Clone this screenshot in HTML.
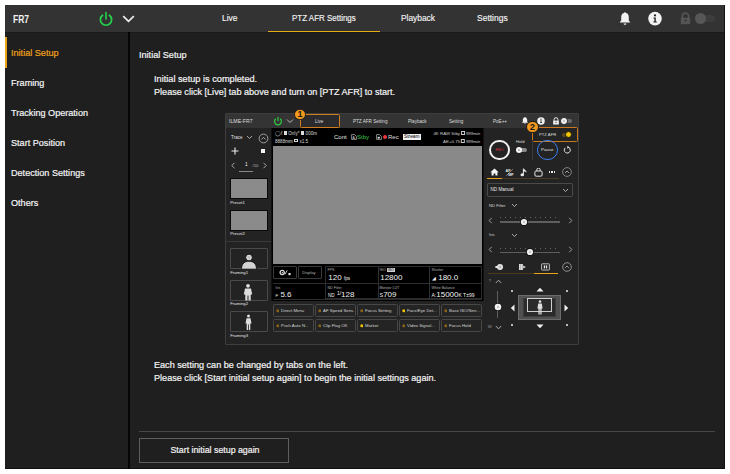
<!DOCTYPE html>
<html><head><meta charset="utf-8">
<style>
*{margin:0;padding:0;box-sizing:border-box}
html,body{width:730px;height:474px;background:#fff;overflow:hidden;position:relative;font-family:"Liberation Sans",sans-serif}
.a{position:absolute}
.t{position:absolute;white-space:nowrap;line-height:1;color:#e6e6e6}
#app{left:5px;top:5px;width:720px;height:464px;background:#1f1f1f;border-right:1px solid #121212;border-bottom:1px solid #121212}
#hdr{left:5px;top:5px;width:719px;height:27px;background:#333}
.side{font-size:9.1px;left:11px;color:#f4f4f4;-webkit-text-stroke:0.2px currentColor}
.tab{color:#f2f2f2;-webkit-text-stroke:0.15px currentColor}
.body{font-size:9.1px;color:#f4f4f4;-webkit-text-stroke:0.2px currentColor}
/* embedded */
#emb{left:225px;top:113px;width:354px;height:232px;background:#232323;border:1px solid #3d3d3d;border-radius:1px}
.e{position:absolute;white-space:nowrap;line-height:1;color:#ddd;font-size:4px}
</style></head><body>
<div id="app" class="a"></div>
<div id="hdr" class="a"></div>
<div class="a" style="left:5px;top:32px;width:719px;height:1px;background:#191919"></div>
<div class="t" style="left:12.8px;top:14px;font-size:10.6px;font-weight:bold;transform-origin:0 0;transform:scaleX(0.8);color:#f0f0f0">FR7</div>
<!-- power icon -->
<svg class="a" style="left:98px;top:11px" width="16" height="16" viewBox="0 0 16 16"><path d="M4.6 4.2A5.6 5.6 0 1 0 11.4 4.2" fill="none" stroke="#24d34c" stroke-width="1.7" stroke-linecap="round"/><path d="M8 1.6V8" stroke="#24d34c" stroke-width="1.6" stroke-linecap="round"/></svg>
<svg class="a" style="left:122px;top:14px" width="13" height="9" viewBox="0 0 13 9"><path d="M1.2 2.2L6.5 7.3L11.8 2.2" fill="none" stroke="#eeeeee" stroke-width="1.7"/></svg>
<div class="t tab" style="left:222px;top:14px;font-size:8.5px">Live</div>
<div class="t tab" style="left:292px;top:14px;font-size:8.3px;transform-origin:0 0;transform:scaleX(0.96)">PTZ AFR Settings</div>
<div class="a" style="left:267.8px;top:30.6px;width:112px;height:1.7px;background:#e6ab12"></div>
<div class="t tab" style="left:401px;top:14px;font-size:8.4px">Playback</div>
<div class="t tab" style="left:477px;top:14px;font-size:8.5px">Settings</div>
<!-- bell -->
<svg class="a" style="left:618px;top:11px" width="14" height="15" viewBox="0 0 14 15"><path d="M7 1.2C7.6 1.2 8 1.6 8 2.1C10 2.6 10.8 4.4 10.8 6.4V9.6L12.4 11.6H1.6L3.2 9.6V6.4C3.2 4.4 4 2.6 6 2.1C6 1.6 6.4 1.2 7 1.2Z" fill="#f2f2f2"/><path d="M5.6 12.4H8.4C8.4 13.3 7.8 13.8 7 13.8C6.2 13.8 5.6 13.3 5.6 12.4Z" fill="#f2f2f2"/></svg>
<!-- info -->
<svg class="a" style="left:647px;top:11px" width="16" height="16" viewBox="0 0 16 16"><circle cx="8" cy="7.6" r="6.8" fill="#f2f2f2"/><circle cx="8" cy="4.4" r="1.1" fill="#222"/><path d="M6.4 6.4H8.8V10.6H9.8V11.6H6.4V10.6H7.4V7.4H6.4Z" fill="#222"/></svg>
<!-- lock -->
<svg class="a" style="left:679px;top:12px" width="13" height="13" viewBox="0 0 13 13"><path d="M3.4 6V4.2A3.1 3.1 0 0 1 9.6 4.2V6" fill="none" stroke="#555" stroke-width="1.6"/><rect x="1.8" y="5.8" width="9.4" height="6.4" fill="#555"/><circle cx="6.5" cy="8.6" r="1" fill="#333"/></svg>
<div class="a" style="left:697px;top:15px;width:18px;height:7px;border-radius:4px;background:#3d3d3d"></div>
<div class="a" style="left:695px;top:13px;width:11px;height:11px;border-radius:50%;background:#575757"></div>

<!-- sidebar -->
<div class="a" style="left:128px;top:32px;width:1.5px;height:437px;background:#050505"></div>
<div class="a" style="left:5px;top:37px;width:2px;height:31px;background:#e8a317"></div>
<div class="t side" style="top:49px;color:#f0a21c">Initial Setup</div>
<div class="t side" style="top:79px">Framing</div>
<div class="t side" style="top:109px">Tracking Operation</div>
<div class="t side" style="top:139px">Start Position</div>
<div class="t side" style="top:169px">Detection Settings</div>
<div class="t side" style="top:199px">Others</div>

<!-- content -->
<div class="t body" style="left:139px;top:51px">Initial Setup</div>
<div class="t body" style="left:154px;top:75px;font-size:9.2px">Initial setup is completed.</div>
<div class="t body" style="left:154px;top:88px">Please click [Live] tab above and turn on [PTZ AFR] to start.</div>
<div class="t body" style="left:154px;top:361px">Each setting can be changed by tabs on the left.</div>
<div class="t body" style="left:154px;top:374px">Please click [Start initial setup again] to begin the initial settings again.</div>
<div class="a" style="left:139px;top:431.1px;width:576px;height:1.3px;background:#464646"></div>
<div class="a" style="left:139px;top:437.5px;width:150px;height:25.5px;border:1px solid #5e5e5e"></div>
<div class="t body" style="left:170.5px;top:445.6px;font-size:8.8px">Start initial setup again</div>


<div id="emb" class="a"></div>
<!-- embedded header -->
<div class="a" style="left:226px;top:114px;width:352px;height:14px;background:#343434"></div>
<div class="e" style="left:229px;top:119px;font-size:5.2px;color:#ddd">ILME-FR7</div>
<svg class="a" style="left:273px;top:116px" width="10" height="10" viewBox="0 0 10 10"><path d="M2.8 2.8A3.4 3.4 0 1 0 7.2 2.8" fill="none" stroke="#2ecc40" stroke-width="1.2"/><path d="M5 1V5" stroke="#2ecc40" stroke-width="1.2"/></svg>
<svg class="a" style="left:286px;top:118px" width="8" height="6" viewBox="0 0 8 6"><path d="M1 1.5L4 4.5L7 1.5" fill="none" stroke="#ccc" stroke-width="0.9"/></svg>
<div class="a" style="left:299.8px;top:114px;width:40.4px;height:13.6px;border:1.3px solid #d07e1c;border-radius:1.5px;background:#2b2b2e"></div>
<div class="e" style="left:315px;top:120px;font-size:4.6px">Live</div>
<div class="e" style="left:353px;top:120px;font-size:4.6px">PTZ AFR Setting</div>
<div class="e" style="left:408px;top:120px;font-size:4.6px">Playback</div>
<div class="e" style="left:449px;top:120px;font-size:4.6px">Setting</div>
<div class="e" style="left:493px;top:120px;font-size:4.6px">PoE++</div>
<svg class="a" style="left:521px;top:116px" width="8" height="9" viewBox="0 0 14 15"><path d="M7 1.2C7.6 1.2 8 1.6 8 2.1C10 2.6 10.8 4.4 10.8 6.4V9.6L12.4 11.6H1.6L3.2 9.6V6.4C3.2 4.4 4 2.6 6 2.1C6 1.6 6.4 1.2 7 1.2Z" fill="#f2f2f2"/><path d="M5.6 12.4H8.4C8.4 13.3 7.8 13.8 7 13.8C6.2 13.8 5.6 13.3 5.6 12.4Z" fill="#f2f2f2"/></svg>
<svg class="a" style="left:537px;top:117px" width="8" height="8" viewBox="0 0 16 16"><circle cx="8" cy="8" r="7.5" fill="#f2f2f2"/><circle cx="8" cy="4.4" r="1.3" fill="#222"/><path d="M6.4 6.4H8.9V10.6H9.9V11.8H6.2V10.6H7.3V7.5H6.4Z" fill="#222"/></svg>
<svg class="a" style="left:552px;top:116.5px" width="8" height="8" viewBox="0 0 13 13"><path d="M3.4 6V4.2A3.1 3.1 0 0 1 9.6 4.2V6" fill="none" stroke="#eee" stroke-width="1.6"/><rect x="1.8" y="5.8" width="9.4" height="6.4" fill="#eee"/><circle cx="6.5" cy="8.6" r="1" fill="#333"/></svg>
<div class="a" style="left:562px;top:119px;width:10px;height:4.4px;border-radius:2.2px;background:#6a6a6a"></div>
<div class="a" style="left:560.2px;top:117.2px;width:7.6px;height:7.6px;border-radius:50%;background:#f0f0f0;border:0.6px solid #222"></div><div class="a" style="left:563.2px;top:120px;width:2.2px;height:2.2px;border-radius:50%;background:#bbb"></div>
<!-- badge 1 -->
<div class="a" style="left:294px;top:108.6px;width:11.6px;height:11.6px;border-radius:50%;background:#f39a1e;border:1px solid #1f1f1f"></div>
<div class="e" style="left:297.6px;top:110px;font-size:9px;font-weight:bold;color:#1a1a1a">1</div>
<!-- left column -->
<div class="a" style="left:270.5px;top:128px;width:1.5px;height:173px;background:#111"></div>
<div class="e" style="left:231px;top:135.8px;font-size:4.6px;color:#e0e0e0">Trace</div>
<svg class="a" style="left:246px;top:135px" width="7" height="5" viewBox="0 0 7 5"><path d="M1 1L3.5 3.5L6 1" fill="none" stroke="#ccc" stroke-width="0.8"/></svg>
<svg class="a" style="left:258px;top:133px" width="11" height="11" viewBox="0 0 11 11"><circle cx="5.5" cy="5.5" r="4.4" fill="none" stroke="#bbb" stroke-width="0.8"/><path d="M3.5 6.4L5.5 4.4L7.5 6.4" fill="none" stroke="#ccc" stroke-width="0.8"/></svg>
<svg class="a" style="left:231px;top:147px" width="8" height="8" viewBox="0 0 8 8"><path d="M4 0.5V7.5M0.5 4H7.5" stroke="#eee" stroke-width="1.1"/></svg>
<div class="a" style="left:261px;top:148.6px;width:4.2px;height:4.2px;background:#f4f4f4"></div>
<svg class="a" style="left:230px;top:162px" width="6" height="7" viewBox="0 0 6 7"><path d="M4.5 0.8L1.8 3.5L4.5 6.2" fill="none" stroke="#ccc" stroke-width="0.8"/></svg>
<div class="e" style="left:245px;top:163px;font-size:4.8px;color:#eee">1</div>
<div class="e" style="left:252.6px;top:163.6px;font-size:4.2px;color:#bbb">/10</div>
<svg class="a" style="left:262px;top:162px" width="6" height="7" viewBox="0 0 6 7"><path d="M1.5 0.8L4.2 3.5L1.5 6.2" fill="none" stroke="#ccc" stroke-width="0.8"/></svg>
<div class="a" style="left:239px;top:171px;width:13.5px;height:0.8px;background:#888"></div>
<div class="a" style="left:230px;top:178px;width:38px;height:21px;background:#8b8b8b;border:0.6px solid #0a0a0a"></div>
<div class="e" style="left:230.3px;top:200.7px;font-size:4.2px;color:#e8e8e8">Preset1</div>
<div class="a" style="left:230px;top:210px;width:38px;height:21px;background:#8b8b8b;border:0.6px solid #0a0a0a"></div>
<div class="e" style="left:230.3px;top:232.4px;font-size:4.2px;color:#e8e8e8">Preset2</div>
<div class="a" style="left:226px;top:240.5px;width:45px;height:0.8px;background:#3a3a3a"></div>
<div class="a" style="left:230px;top:248.4px;width:37.5px;height:21px;border:0.8px solid #4a4a4a;border-radius:1px"></div>
<div class="e" style="left:230.3px;top:271.1px;font-size:4.2px;color:#e8e8e8">Framing1</div>
<div class="a" style="left:230px;top:280px;width:37.5px;height:20.5px;border:0.8px solid #4a4a4a;border-radius:1px"></div>
<div class="e" style="left:230.3px;top:301.9px;font-size:4.2px;color:#e8e8e8">Framing2</div>
<div class="a" style="left:230px;top:311.3px;width:37.5px;height:21px;border:0.8px solid #4a4a4a;border-radius:1px"></div>
<div class="e" style="left:230.3px;top:333.6px;font-size:4.2px;color:#e8e8e8">Framing3</div>
<svg class="a" style="left:240.3px;top:252px" width="18" height="18" viewBox="0 0 18 18"><path d="M1.5 17.2C1.5 11.8 4.6 9.2 9 9.2C13.4 9.2 16.5 11.8 16.5 17.2Z" fill="#d2d2d2" stroke="#0e0e0e" stroke-width="0.9"/><circle cx="9" cy="5.5" r="3.4" fill="#d8d8d8" stroke="#0e0e0e" stroke-width="1"/><circle cx="9" cy="5.5" r="1.4" fill="#bdbdbd"/></svg>
<svg class="a" style="left:243px;top:283px" width="10" height="18" viewBox="0 0 10 18"><circle cx="5" cy="2.8" r="1.9" fill="#ddd"/><path d="M2 5.5H8L9.2 11.5H7.7V17.5H5.5V12.5H4.5V17.5H2.3V11.5H0.8Z" fill="#ddd"/></svg>
<svg class="a" style="left:244.5px;top:314px" width="7" height="17" viewBox="0 0 7 17"><circle cx="3.5" cy="2" r="1.5" fill="#ddd"/><path d="M1.5 4.2H5.5L6.5 9.5H5.3V16H3.9V10.5H3.1V16H1.7V9.5H0.5Z" fill="#ddd"/></svg>
<!-- center black panel -->
<div class="a" style="left:272px;top:128px;width:211.5px;height:173px;background:#000"></div>
<div class="a" style="left:273.2px;top:146.4px;width:208.4px;height:117.3px;background:#898989"></div>
<div class="e" style="left:275px;top:131.1px;font-size:4.6px;color:#ddd">&#9711;f <span style="display:inline-block;width:3.4px;height:3.6px;background:#ddd"></span> Only* <span style="display:inline-block;width:3.6px;height:3.6px;background:#ddd"></span> 000m</div>
<div class="e" style="left:275px;top:138.9px;font-size:4.6px;color:#ddd">8888mm <span style="display:inline-block;width:4px;height:3.6px;border:0.7px solid #ddd"></span> x1.5</div>
<div class="e" style="left:334px;top:134px;font-size:6px;color:#e6e6e6">Cont</div>
<svg class="a" style="left:350.5px;top:134px" width="6" height="6" viewBox="0 0 6 6"><path d="M0.6 0.6H3.6L5.4 2.4V5.4H0.6Z" fill="none" stroke="#ddd" stroke-width="0.6"/><text x="1.4" y="5" font-size="3.4" font-family="Liberation Sans" fill="#ddd">A</text></svg>
<div class="e" style="left:357px;top:134px;font-size:6px;color:#39c54a">Stby</div>
<svg class="a" style="left:376px;top:134px" width="6" height="6" viewBox="0 0 6 6"><path d="M0.6 0.6H3.6L5.4 2.4V5.4H0.6Z" fill="none" stroke="#ddd" stroke-width="0.6"/><rect x="1.6" y="2.8" width="2.2" height="1.8" fill="#ddd"/></svg>
<div class="a" style="left:383.4px;top:135px;width:4px;height:4px;border-radius:50%;background:#f03a3a"></div>
<div class="e" style="left:388px;top:134px;font-size:6px;color:#ddd">Rec</div>
<div class="a" style="left:403px;top:134px;width:18.4px;height:5.8px;background:#f2f2f2"></div>
<div class="e" style="left:404px;top:134.6px;font-size:4.8px;color:#000">Stream</div>
<div class="e" style="left:480.3px;top:131px;font-size:4.4px;color:#ccc;transform:translateX(-100%)">4K RAW Stby <span style="display:inline-block;width:3.4px;height:3.6px;border:0.7px solid #ccc"></span> 999min</div>
<div class="e" style="left:480.3px;top:139.2px;font-size:4.4px;color:#ccc;transform:translateX(-100%)">AE+0.75 <span style="display:inline-block;width:3.4px;height:3.6px;border:0.7px solid #ccc"></span> 999min</div>
<!-- cells -->
<div class="a" style="left:273.1px;top:266.1px;width:24px;height:12.9px;border:0.8px solid #3a3a3a;border-radius:1px"></div>
<svg class="a" style="left:278.5px;top:268px" width="14" height="9" viewBox="0 0 14 9"><circle cx="3.2" cy="4.5" r="2.1" fill="none" stroke="#e0e0e0" stroke-width="1.3"/><circle cx="3.4" cy="4.6" r="0.7" fill="#e0e0e0"/><path d="M6 6.2L8.2 2.4" stroke="#e0e0e0" stroke-width="0.9"/><rect x="9.4" y="5" width="2.2" height="2.2" fill="#e0e0e0"/></svg>
<div class="a" style="left:297.8px;top:266.1px;width:23.9px;height:12.9px;border:0.8px solid #3a3a3a;border-radius:1px"></div>
<div class="e" style="left:302.3px;top:270.6px;font-size:4px;color:#b8b8b8">Display</div>
<div class="a" style="left:325.3px;top:266.4px;width:157px;height:33px;border:0.8px solid #2c2c2c"></div>
<div class="a" style="left:273px;top:282.8px;width:209px;height:0.8px;background:#2c2c2c"></div>
<div class="a" style="left:273px;top:299.3px;width:209px;height:0.8px;background:#2c2c2c"></div>
<div class="a" style="left:377.6px;top:266.4px;width:0.8px;height:33px;background:#303030"></div>
<div class="a" style="left:428.9px;top:266.4px;width:0.8px;height:33px;background:#303030"></div>
<div class="a" style="left:325.3px;top:282.8px;width:0.8px;height:17px;background:#2c2c2c"></div>
<div class="e" style="left:327.5px;top:269.2px;font-size:3.6px;color:#b4b4b4">FPS</div>
<div class="e" style="left:328.3px;top:274.4px;font-size:8px;color:#f2f2f2">120 <span style="font-size:4.6px">fps</span></div>
<div class="e" style="left:379.5px;top:269.2px;font-size:3.6px;color:#b4b4b4">ISO <span style="background:#cfcfcf;color:#000;padding:0 1px">ISO</span></div>
<div class="e" style="left:380.2px;top:274.4px;font-size:8px;color:#f2f2f2">12800</div>
<div class="e" style="left:431.5px;top:269.2px;font-size:3.6px;color:#b4b4b4">Shutter</div>
<div class="e" style="left:432px;top:274.4px;font-size:8px;color:#f2f2f2"><span style="font-size:4.6px">&#9698;</span> 180.0</div>
<div class="e" style="left:275.5px;top:286.6px;font-size:3.6px;color:#b4b4b4">Iris</div>
<div class="e" style="left:275.5px;top:291.2px;font-size:8px;color:#f2f2f2"><span style="font-size:4.4px">F</span> 5.6</div>
<div class="e" style="left:327.5px;top:286.6px;font-size:3.6px;color:#b4b4b4">ND Filter</div>
<div class="e" style="left:328px;top:291.2px;font-size:8px;color:#f2f2f2"><span style="font-size:4.6px">ND</span> <span style="font-size:5px;vertical-align:top">1/</span>128</div>
<div class="e" style="left:379.5px;top:286.6px;font-size:3.6px;color:#b4b4b4">Monitor LUT</div>
<div class="e" style="left:379.5px;top:291.2px;font-size:8px;color:#f2f2f2"><span style="font-size:5.5px">S</span>709</div>
<div class="e" style="left:431.5px;top:286.6px;font-size:3.6px;color:#b4b4b4">White Balance</div>
<div class="e" style="left:431.5px;top:291.2px;font-size:8px;color:#f2f2f2"><span style="font-size:5px">A:</span>15000<span style="font-size:5px">K T&#177;99</span></div>
<!-- buttons -->
<div class="a" style="left:273.1px;top:304.3px;width:40.7px;height:12.5px;background:#242424;border:0.9px solid #474747;border-radius:1.4px"></div>
<svg class="a" style="left:275.9px;top:309.4px" width="3.6" height="3.6" viewBox="0 0 4 4"><circle cx="2" cy="2" r="1.7" fill="#8a6414"/></svg>
<div class="e" style="left:281.1px;top:309.0px;font-size:4.3px;color:#d6d6d6">Direct Menu</div>
<div class="a" style="left:315.1px;top:304.3px;width:40.7px;height:12.5px;background:#242424;border:0.9px solid #474747;border-radius:1.4px"></div>
<svg class="a" style="left:317.9px;top:309.4px" width="3.6" height="3.6" viewBox="0 0 4 4"><circle cx="2" cy="2" r="1.7" fill="#8a6414"/></svg>
<div class="e" style="left:323.1px;top:309.0px;font-size:4.3px;color:#d6d6d6">AF Speed Sens.</div>
<div class="a" style="left:357.1px;top:304.3px;width:40.7px;height:12.5px;background:#242424;border:0.9px solid #474747;border-radius:1.4px"></div>
<svg class="a" style="left:359.9px;top:309.4px" width="3.6" height="3.6" viewBox="0 0 4 4"><circle cx="2" cy="2" r="1.7" fill="#8a6414"/></svg>
<div class="e" style="left:365.1px;top:309.0px;font-size:4.3px;color:#d6d6d6">Focus Setting</div>
<div class="a" style="left:399.1px;top:304.3px;width:40.7px;height:12.5px;background:#242424;border:0.9px solid #474747;border-radius:1.4px"></div>
<svg class="a" style="left:401.9px;top:309.4px" width="3.6" height="3.6" viewBox="0 0 4 4"><circle cx="2" cy="2" r="1.7" fill="#f5c400"/></svg>
<div class="e" style="left:407.1px;top:309.0px;font-size:4.3px;color:#d6d6d6">Face/Eye Det...</div>
<div class="a" style="left:441.1px;top:304.3px;width:40.7px;height:12.5px;background:#242424;border:0.9px solid #474747;border-radius:1.4px"></div>
<svg class="a" style="left:443.9px;top:309.4px" width="3.6" height="3.6" viewBox="0 0 4 4"><circle cx="2" cy="2" r="1.7" fill="#8a6414"/></svg>
<div class="e" style="left:449.1px;top:309.0px;font-size:4.3px;color:#d6d6d6">Base ISO/Sen...</div>
<div class="a" style="left:273.1px;top:319.1px;width:40.7px;height:12.5px;background:#242424;border:0.9px solid #474747;border-radius:1.4px"></div>
<svg class="a" style="left:275.9px;top:324.2px" width="3.6" height="3.6" viewBox="0 0 4 4"><circle cx="2" cy="2" r="1.7" fill="#8a6414"/></svg>
<div class="e" style="left:281.1px;top:323.8px;font-size:4.3px;color:#d6d6d6">Push Auto N...</div>
<div class="a" style="left:315.1px;top:319.1px;width:40.7px;height:12.5px;background:#242424;border:0.9px solid #474747;border-radius:1.4px"></div>
<svg class="a" style="left:317.9px;top:324.2px" width="3.6" height="3.6" viewBox="0 0 4 4"><circle cx="2" cy="2" r="1.7" fill="#8a6414"/></svg>
<div class="e" style="left:323.1px;top:323.8px;font-size:4.3px;color:#d6d6d6">Clip Flag OK</div>
<div class="a" style="left:357.1px;top:319.1px;width:40.7px;height:12.5px;background:#242424;border:0.9px solid #474747;border-radius:1.4px"></div>
<svg class="a" style="left:359.9px;top:324.2px" width="3.6" height="3.6" viewBox="0 0 4 4"><circle cx="2" cy="2" r="1.7" fill="#f5c400"/></svg>
<div class="e" style="left:365.1px;top:323.8px;font-size:4.3px;color:#d6d6d6">Marker</div>
<div class="a" style="left:399.1px;top:319.1px;width:40.7px;height:12.5px;background:#242424;border:0.9px solid #474747;border-radius:1.4px"></div>
<svg class="a" style="left:401.9px;top:324.2px" width="3.6" height="3.6" viewBox="0 0 4 4"><circle cx="2" cy="2" r="1.7" fill="#8a6414"/></svg>
<div class="e" style="left:407.1px;top:323.8px;font-size:4.3px;color:#d6d6d6">Video Signal...</div>
<div class="a" style="left:441.1px;top:319.1px;width:40.7px;height:12.5px;background:#242424;border:0.9px solid #474747;border-radius:1.4px"></div>
<svg class="a" style="left:443.9px;top:324.2px" width="3.6" height="3.6" viewBox="0 0 4 4"><circle cx="2" cy="2" r="1.7" fill="#8a6414"/></svg>
<div class="e" style="left:449.1px;top:323.8px;font-size:4.3px;color:#d6d6d6">Focus Hold</div>
<!-- right panel -->
<div class="a" style="left:483.3px;top:128px;width:1px;height:173px;background:#111"></div>
<div class="a" style="left:532.2px;top:126.6px;width:45.8px;height:15.2px;border:1.3px solid #c8781e;border-radius:1.5px"></div>
<div class="a" style="left:526.2px;top:120.6px;width:12.4px;height:12.4px;border-radius:50%;background:#f39a1e;border:1.2px solid #1a1a1a"></div>
<div class="e" style="left:529.7px;top:122.4px;font-size:9.4px;font-weight:bold;color:#1a1a1a">2</div>
<div class="e" style="left:539px;top:133.3px;font-size:4.2px;color:#ddd">PTZ AFR</div>
<div class="a" style="left:561.5px;top:133px;width:9px;height:3.6px;border-radius:1.8px;background:#5a4520"></div>
<div class="a" style="left:565.3px;top:131.2px;width:7.2px;height:7.2px;border-radius:50%;background:#f5c400;border:1px solid #1a1a1a"></div>
<div class="a" style="left:489.2px;top:139.7px;width:20.8px;height:20.8px;border-radius:50%;border:2px solid #f2f2f2"></div>
<div class="e" style="left:495.4px;top:148.3px;font-size:4.2px;color:#d0303a">REC</div>
<div class="e" style="left:516px;top:140.3px;font-size:4.2px;color:#d8d8d8">Hold</div>
<div class="a" style="left:518px;top:148.2px;width:9px;height:3.8px;border-radius:1.9px;background:#888"></div>
<div class="a" style="left:516px;top:147px;width:6.4px;height:6.4px;border-radius:50%;background:#f4f4f4"></div><div class="a" style="left:518.2px;top:149.2px;width:2px;height:2px;border-radius:50%;background:#aaa"></div>
<div class="a" style="left:532px;top:140px;width:0.8px;height:20px;background:#3a3a3a"></div>
<div class="a" style="left:536.8px;top:139.7px;width:20.8px;height:20.8px;border-radius:50%;border:1.9px solid #3c7ff0"></div>
<div class="e" style="left:541px;top:148.1px;font-size:4.4px;color:#e6e6e6">Pause</div>
<svg class="a" style="left:562.8px;top:146px" width="8" height="8" viewBox="0 0 8 8"><path d="M2.2 1.9A3 3 0 1 0 5.2 1.2" fill="none" stroke="#e6e6e6" stroke-width="1"/><path d="M4.2 0L6.6 1.3L4.4 2.8Z" fill="#e6e6e6"/></svg>
<!-- tabs -->
<svg class="a" style="left:490px;top:168px" width="9" height="8" viewBox="0 0 9 8"><path d="M4.5 0.4L8.6 4.2H7.4V7.6H5.4V5.4H3.6V7.6H1.6V4.2H0.4Z" fill="#f4f4f4"/></svg>
<svg class="a" style="left:505px;top:167.5px" width="9" height="9" viewBox="0 0 9 9"><text x="0.6" y="3.6" font-size="3.8" font-family="Liberation Sans" font-weight="bold" fill="#e6e6e6">AF</text><text x="3.2" y="8.2" font-size="3.8" font-family="Liberation Sans" font-weight="bold" fill="#e6e6e6">MF</text><path d="M1.2 7.8L7.8 1.2" stroke="#e6e6e6" stroke-width="0.5"/></svg>
<svg class="a" style="left:519.5px;top:167.5px" width="8" height="9" viewBox="0 0 8 9"><path d="M3.4 0.6V6.2" stroke="#eaeaea" stroke-width="1"/><ellipse cx="2.3" cy="6.8" rx="1.8" ry="1.5" fill="#eaeaea"/><path d="M3.4 0.6C4.4 1.8 6.8 2.6 6.6 4.8C6.2 3.8 5 3.4 3.4 3.2Z" fill="#eaeaea"/></svg>
<svg class="a" style="left:533.5px;top:167.5px" width="9" height="9" viewBox="0 0 9 9"><rect x="0.9" y="3" width="7.2" height="5.2" rx="1.2" fill="none" stroke="#e6e6e6" stroke-width="1"/><path d="M2.8 3V1.8A1.7 1.7 0 0 1 6.2 1.8V3" fill="none" stroke="#e6e6e6" stroke-width="1"/></svg>
<div class="a" style="left:548.8px;top:171.2px;width:1.6px;height:1.6px;background:#e6e6e6"></div>
<div class="a" style="left:551.2px;top:171.2px;width:1.6px;height:1.6px;background:#e6e6e6"></div>
<div class="a" style="left:553.6px;top:171.2px;width:1.6px;height:1.6px;background:#e6e6e6"></div>
<svg class="a" style="left:561.5px;top:167px" width="10" height="10" viewBox="0 0 10 10"><circle cx="5" cy="5" r="4.4" fill="none" stroke="#9a9a9a" stroke-width="0.8"/><path d="M3 6L5 4L7 6" fill="none" stroke="#bbb" stroke-width="0.8"/></svg>
<div class="a" style="left:487.4px;top:178px;width:72px;height:0.7px;background:#4a3c22"></div>
<div class="a" style="left:487.4px;top:177.6px;width:14.5px;height:1.4px;background:#e8a317"></div>
<div class="a" style="left:487.1px;top:183px;width:85.5px;height:13.6px;border:0.8px solid #4a4a4a;border-radius:1.2px"></div>
<div class="e" style="left:490.5px;top:187.8px;font-size:4.6px;color:#e6e6e6">ND Manual</div>
<svg class="a" style="left:562px;top:188px" width="7" height="5" viewBox="0 0 7 5"><path d="M1 1L3.5 3.5L6 1" fill="none" stroke="#ccc" stroke-width="0.8"/></svg>
<div class="e" style="left:489px;top:203.6px;font-size:4.2px;color:#d8d8d8">ND Filter</div>
<svg class="a" style="left:511px;top:203.2px" width="7" height="5" viewBox="0 0 7 5"><path d="M1 1L3.5 3.5L6 1" fill="none" stroke="#ccc" stroke-width="0.8"/></svg>
<svg class="a" style="left:488px;top:217px" width="5" height="7" viewBox="0 0 5 7"><path d="M3.8 0.8L1.2 3.5L3.8 6.2" fill="none" stroke="#bbb" stroke-width="0.8"/></svg>
<svg class="a" style="left:568px;top:217px" width="5" height="7" viewBox="0 0 5 7"><path d="M1.2 0.8L3.8 3.5L1.2 6.2" fill="none" stroke="#bbb" stroke-width="0.8"/></svg>
<div class="a" style="left:500px;top:217px;width:60px;height:1px;background:repeating-linear-gradient(90deg,#666 0 0.7px,transparent 0.7px 5px)"></div>
<div class="a" style="left:500px;top:221.4px;width:60px;height:1.2px;background:#5e5e5e"></div>
<svg class="a" style="left:518.6px;top:217.0px" width="10" height="10" viewBox="0 0 10 10"><circle cx="5" cy="5" r="3.9000000000000004" fill="#141414"/><circle cx="5" cy="5" r="3.1" fill="#f2f2f2"/><circle cx="5" cy="5" r="1.2" fill="#c4c4c4"/></svg>
<div class="e" style="left:489px;top:233.3px;font-size:4.2px;color:#d8d8d8">Iris</div>
<svg class="a" style="left:511px;top:233px" width="7" height="5" viewBox="0 0 7 5"><path d="M1 1L3.5 3.5L6 1" fill="none" stroke="#ccc" stroke-width="0.8"/></svg>
<svg class="a" style="left:488px;top:246.2px" width="5" height="7" viewBox="0 0 5 7"><path d="M3.8 0.8L1.2 3.5L3.8 6.2" fill="none" stroke="#bbb" stroke-width="0.8"/></svg>
<svg class="a" style="left:568px;top:246.2px" width="5" height="7" viewBox="0 0 5 7"><path d="M1.2 0.8L3.8 3.5L1.2 6.2" fill="none" stroke="#bbb" stroke-width="0.8"/></svg>
<div class="a" style="left:500px;top:247.5px;width:60px;height:1px;background:repeating-linear-gradient(90deg,#666 0 0.7px,transparent 0.7px 5px)"></div>
<div class="a" style="left:500px;top:251.8px;width:60px;height:1.2px;background:#5e5e5e"></div>
<svg class="a" style="left:524.8px;top:247.4px" width="10" height="10" viewBox="0 0 10 10"><circle cx="5" cy="5" r="3.9000000000000004" fill="#141414"/><circle cx="5" cy="5" r="3.1" fill="#f2f2f2"/><circle cx="5" cy="5" r="1.2" fill="#c4c4c4"/></svg>
<!-- icon row 2 -->
<svg class="a" style="left:495px;top:263px" width="9" height="8" viewBox="0 0 9 8"><circle cx="5" cy="4" r="3" fill="#e8e8e8"/><circle cx="5" cy="4" r="1.4" fill="#bbb"/><rect x="0.4" y="3" width="2" height="2" fill="#e8e8e8"/></svg>
<svg class="a" style="left:518px;top:263px" width="9" height="8" viewBox="0 0 9 8"><rect x="1" y="1" width="3.8" height="6" fill="#dedede"/><path d="M2.4 1V7" stroke="#888" stroke-width="0.5"/><path d="M5.2 2.6L7.8 4L5.2 5.4Z" fill="#dedede"/></svg>
<svg class="a" style="left:541px;top:263px" width="9" height="8" viewBox="0 0 9 8"><rect x="0.6" y="0.8" width="7.8" height="6.2" rx="0.6" fill="none" stroke="#ccc" stroke-width="0.9"/><rect x="2.8" y="2.4" width="1.3" height="3" fill="#e6e6e6"/><rect x="4.9" y="2.4" width="1.3" height="3" fill="#e6e6e6"/></svg>
<svg class="a" style="left:561.7px;top:262px" width="10" height="10" viewBox="0 0 10 10"><circle cx="5" cy="5" r="4.3" fill="none" stroke="#aaa" stroke-width="0.8"/><path d="M3.2 5.8L5 4L6.8 5.8" fill="none" stroke="#bbb" stroke-width="0.8"/></svg>
<div class="a" style="left:487.6px;top:273px;width:70px;height:0.8px;background:#4a3a1a"></div>
<div class="a" style="left:534px;top:272.6px;width:24px;height:1.5px;background:#e8a317"></div>
<div class="e" style="left:488.8px;top:279.2px;font-size:4.2px;color:#9a9a9a">T</div>
<svg class="a" style="left:494.5px;top:278.6px" width="7" height="5" viewBox="0 0 7 5"><path d="M0.8 4L3.5 1.2L6.2 4" fill="none" stroke="#bbb" stroke-width="0.9"/></svg>
<div class="a" style="left:496.9px;top:291px;width:1.2px;height:26.6px;background:#5e5e5e"></div>
<svg class="a" style="left:492.5px;top:302.3px" width="10" height="10" viewBox="0 0 10 10"><circle cx="5" cy="5" r="4.1" fill="#141414"/><circle cx="5" cy="5" r="3.3" fill="#f2f2f2"/><circle cx="5" cy="5" r="1.2" fill="#c4c4c4"/></svg>
<div class="e" style="left:487.8px;top:325.2px;font-size:4.2px;color:#9a9a9a">W</div>
<svg class="a" style="left:494.5px;top:324.6px" width="7" height="5" viewBox="0 0 7 5"><path d="M0.8 1L3.5 3.8L6.2 1" fill="none" stroke="#bbb" stroke-width="0.9"/></svg>
<!-- pan tilt -->
<div class="a" style="left:518px;top:295.3px;width:42.5px;height:24.7px;background:#505050;border:1px solid #6c6c6c"></div>
<div class="a" style="left:523px;top:297.7px;width:32.5px;height:19.3px;background:#2b2b2b;border:0.8px solid #3c3c3c"></div>
<div class="a" style="left:526.8px;top:297.7px;width:25.2px;height:14.3px;border:1px solid #cfcfcf"></div>
<svg class="a" style="left:536.6px;top:299.6px" width="6" height="15" viewBox="0 0 6 15"><circle cx="3" cy="1.6" r="1.3" fill="#ddd"/><path d="M1.2 3.4H4.8L5.6 8.4H4.6V14.6H3.3V9.2H2.7V14.6H1.4V8.4H0.4Z" fill="#ddd"/></svg>
<div class="a" style="left:510.8px;top:289.8px;width:2.4px;height:2.4px;background:#eee;border-radius:50%"></div>
<div class="a" style="left:565.6px;top:289.8px;width:2.4px;height:2.4px;background:#eee;border-radius:50%"></div>
<div class="a" style="left:510.8px;top:323.5px;width:2.4px;height:2.4px;background:#eee;border-radius:50%"></div>
<div class="a" style="left:565.6px;top:323.5px;width:2.4px;height:2.4px;background:#eee;border-radius:50%"></div>
<svg class="a" style="left:535.5px;top:287px" width="8" height="5" viewBox="0 0 8 5"><path d="M0.5 4.5L4 0.8L7.5 4.5Z" fill="#f0f0f0"/></svg>
<svg class="a" style="left:535.5px;top:323.6px" width="8" height="5" viewBox="0 0 8 5"><path d="M0.5 0.5L4 4.2L7.5 0.5Z" fill="#f0f0f0"/></svg>
<svg class="a" style="left:509.8px;top:304px" width="5" height="8" viewBox="0 0 5 8"><path d="M4.5 0.5L0.8 4L4.5 7.5Z" fill="#f0f0f0"/></svg>
<svg class="a" style="left:564.2px;top:304px" width="5" height="8" viewBox="0 0 5 8"><path d="M0.5 0.5L4.2 4L0.5 7.5Z" fill="#f0f0f0"/></svg>
</body></html>
